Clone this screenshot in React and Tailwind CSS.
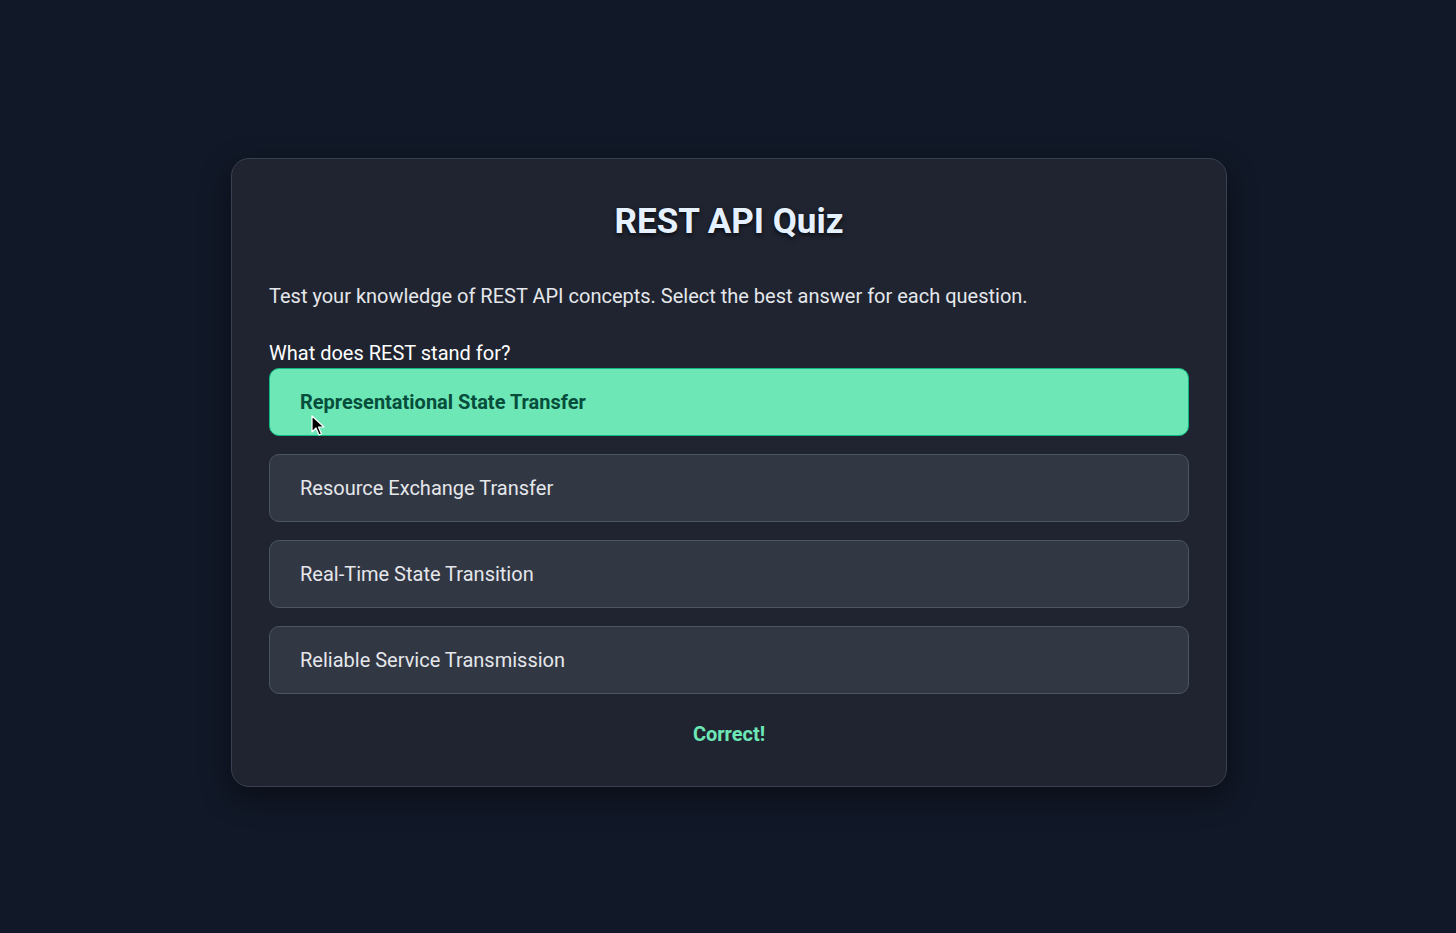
export default function App() {
  const options = [
    "Representational State Transfer",
    "Resource Exchange Transfer",
    "Real-Time State Transition",
    "Reliable Service Transmission",
  ];
  return (
    <div
      className="min-h-[933px] w-full bg-[#111827] flex items-start justify-center pt-[158px]"
      style={{ fontFamily: "Roboto, 'Noto Sans', sans-serif" }}
    >
      <div className="ml-[2px] w-[996px] rounded-[18px] border border-[#374151] bg-[#1f2430] px-[37px] pt-[40px] pb-[38px] shadow-[0_10px_30px_rgba(0,0,0,0.45)]">
        <h1 className="text-center text-[35px] font-bold leading-[46px] text-[#e6f1ff] [text-shadow:0_2px_4px_rgba(0,0,0,0.7)]">
          REST API Quiz
        </h1>
        <p className="mt-[37px] text-[20px] leading-[28px] text-[#e5e7eb]">
          Test your knowledge of REST API concepts. Select the best answer for each question.
        </p>
        <p className="mt-[29px] text-[20px] leading-[28px] text-white">What does REST stand for?</p>
        <div className="mt-[1px] flex flex-col gap-[18px]">
          {options.map((o, i) =>
            i === 0 ? (
              <div
                key={o}
                className="relative flex h-[68px] items-center rounded-[10px] border border-[#10b981] bg-[#6ee7b7] pl-[30px] text-[20px] font-bold text-[#064e3b]"
              >
                {o}
                <svg className="absolute left-[41px] top-[46px]" width="14" height="22" viewBox="0 0 14 22">
                  <path d="M1 1 L1 17 L5 13 L8 20 L10.5 19 L7.5 12 L13 12 Z" fill="#000" stroke="#fff" strokeWidth="1.2" strokeLinejoin="round" />
                </svg>
              </div>
            ) : (
              <div
                key={o}
                className="flex h-[68px] items-center rounded-[10px] border border-[#4b5563] bg-[#323744] pl-[30px] text-[20px] text-[#e5e7eb]"
              >
                {o}
              </div>
            )
          )}
        </div>
        <p className="mt-[26px] text-center text-[20px] font-bold leading-[28px] text-[#6ee7b7]">Correct!</p>
      </div>
    </div>
  );
}
